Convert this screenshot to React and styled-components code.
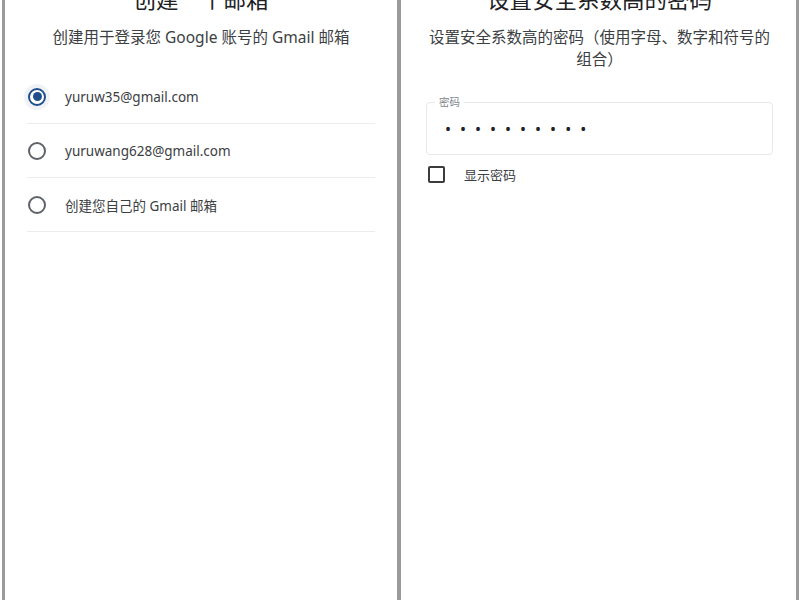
import React from 'react'
import styled, { createGlobalStyle } from 'styled-components'

const GlobalStyle = createGlobalStyle`
  html, body {
    margin: 0;
    padding: 0;
    background: #fff;
  }
  body {
    font-family: 'Noto Sans', 'Noto Sans CJK SC', sans-serif;
    color: #202124;
  }
`

const Page = styled.div`
  display: flex;
  height: 600px;
  padding: 0 1px 0 2px;
  box-sizing: border-box;
  overflow: hidden;
  background: #fff;
`

const Panel = styled.section`
  box-sizing: border-box;
  width: ${props => props.width || 'auto'};
  flex: ${props => props.width ? 'none' : 1};
  display: flex;
  flex-direction: column;
  align-items: stretch;
  padding: 0 ${props => props.padRight}px 0 ${props => props.padLeft}px;
  border-left: ${props => props.borderLeft}px solid #9b9b9b;
  border-right: ${props => props.borderRight || 0}px solid #9b9b9b;
  background: #fff;
`

const Title = styled.h1`
  margin: -14px 0 0;
  font-size: 22.5px;
  line-height: 28px;
  font-weight: 400;
  text-align: center;
  color: #202124;
`

const Subtitle = styled.p`
  margin: 12px auto 0;
  max-width: 345px;
  font-size: 15.5px;
  line-height: 22px;
  text-align: center;
  color: #3c4043;
`

const List = styled.div`
  margin-top: 22px;
  display: flex;
  flex-direction: column;
`

const Row = styled.label`
  display: flex;
  align-items: center;
  gap: 19px;
  height: 53px;
  padding-left: 1px;
  border-bottom: 1px solid #ececec;
  font-size: 13.5px;
  color: #3c4043;
`

const Radio = styled.span`
  box-sizing: border-box;
  width: 18px;
  height: 18px;
  border-radius: 50%;
  border: 2px solid ${props => props.checked ? '#1f4e8c' : '#5f6368'};
  display: flex;
  align-items: center;
  justify-content: center;
  box-shadow: ${props => props.checked ? '0 0 0 4px rgba(31, 78, 140, 0.07)' : 'none'};

  &::after {
    content: '';
    width: 9px;
    height: 9px;
    border-radius: 50%;
    background: ${props => props.checked ? '#1f4e8c' : 'transparent'};
  }
`

const Field = styled.div`
  position: relative;
  margin-top: 32px;
  height: 53px;
  box-sizing: border-box;
  border: 1px solid #e8e8e8;
  border-radius: 4px;
  display: flex;
  align-items: center;
  padding-left: 18px;
`

const FieldLabel = styled.span`
  position: absolute;
  top: -8px;
  left: 8px;
  padding: 0 4px;
  background: #fff;
  font-size: 10.5px;
  line-height: 14px;
  color: #80868b;
`

const Dots = styled.span`
  font-size: 16px;
  letter-spacing: 9px;
  color: #202124;
  line-height: 1;
`

const CheckRow = styled.label`
  display: flex;
  align-items: center;
  gap: 19px;
  margin-top: 10px;
  padding-left: 2px;
  font-size: 13px;
  color: #3c4043;
`

const Box = styled.span`
  box-sizing: border-box;
  width: 17px;
  height: 17px;
  border: 2px solid #3c3c3c;
  border-radius: 2px;
`

const emails = [
  { text: 'yuruw35@gmail.com', checked: true },
  { text: 'yuruwang628@gmail.com', checked: false },
  { text: '创建您自己的 Gmail 邮箱', checked: false },
]

export default function App() {
  return (
    <>
      <GlobalStyle />
      <Page>
        <Panel width="395px" borderLeft={3} padLeft={22} padRight={22}>
          <Title>创建一个邮箱</Title>
          <Subtitle>创建用于登录您 Google 账号的 Gmail 邮箱</Subtitle>
          <List>
            {emails.map(e => (
              <Row key={e.text}>
                <Radio checked={e.checked} />
                {e.text}
              </Row>
            ))}
          </List>
        </Panel>
        <Panel borderLeft={4} borderRight={3} padLeft={25} padRight={23}>
          <Title>设置安全系数高的密码</Title>
          <Subtitle>设置安全系数高的密码（使用字母、数字和符号的组合）</Subtitle>
          <Field>
            <FieldLabel>密码</FieldLabel>
            <Dots>••••••••••</Dots>
          </Field>
          <CheckRow>
            <Box />
            显示密码
          </CheckRow>
        </Panel>
      </Page>
    </>
  )
}
